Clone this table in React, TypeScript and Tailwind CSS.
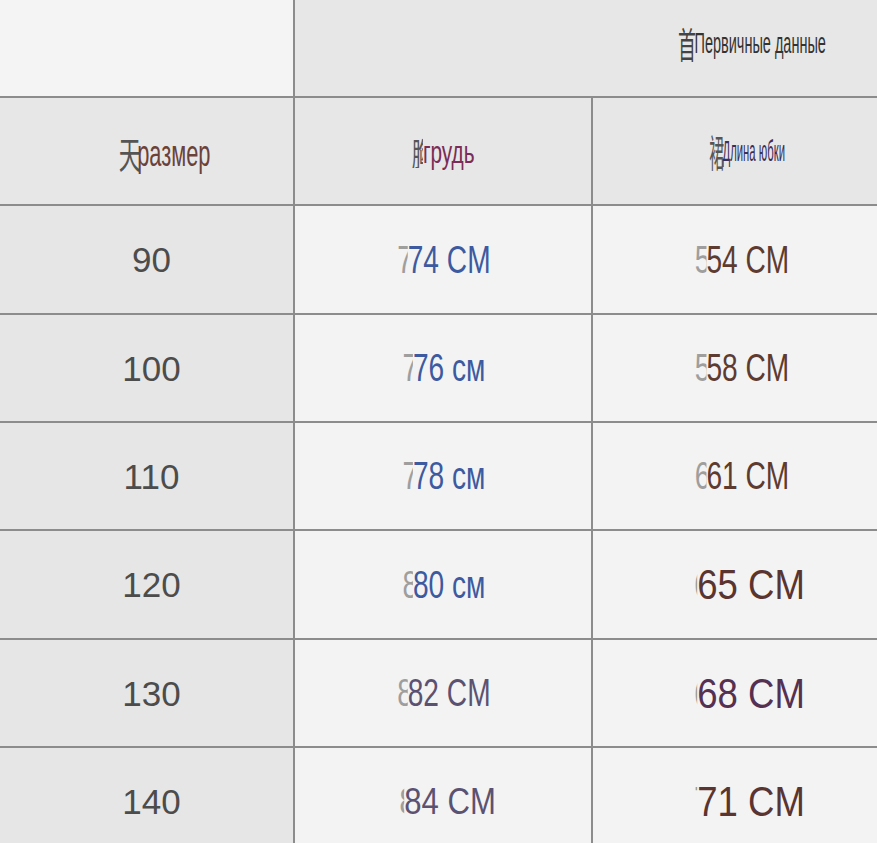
import React from "react";

type Cell = {
  ghost?: string;
  ghostW?: number;
  text: string;
  color: string;
  size: string;
  scale: string;
  pad?: string;
};

// ghost = half-hidden glyph left over in front of the value
const rows: { size: string; chest: Cell; skirt: Cell }[] = [
  {
    size: "90",
    chest: { ghost: "7", ghostW: 14, text: "74 CM", color: "text-[#3d5aa0]", size: "text-[38px]", scale: "scale-x-[0.74]" },
    skirt: { ghost: "5", ghostW: 16, text: "54 CM", color: "text-[#5e3b30]", size: "text-[38px]", scale: "scale-x-[0.74]" },
  },
  {
    size: "100",
    chest: { ghost: "7", ghostW: 14, text: "76 см", color: "text-[#3d5aa0]", size: "text-[38px]", scale: "scale-x-[0.74]" },
    skirt: { ghost: "5", ghostW: 16, text: "58 CM", color: "text-[#5e3b30]", size: "text-[38px]", scale: "scale-x-[0.74]" },
  },
  {
    size: "110",
    chest: { ghost: "7", ghostW: 14, text: "78 см", color: "text-[#3d5aa0]", size: "text-[38px]", scale: "scale-x-[0.74]" },
    skirt: { ghost: "6", ghostW: 16, text: "61 CM", color: "text-[#5e3b30]", size: "text-[38px]", scale: "scale-x-[0.74]" },
  },
  {
    size: "120",
    chest: { ghost: "8", ghostW: 14, text: "80 см", color: "text-[#3d5aa0]", size: "text-[38px]", scale: "scale-x-[0.74]" },
    skirt: { ghost: "6", ghostW: 4, text: "65 CM", color: "text-[#5a3430]", size: "text-[43px]", scale: "scale-x-[0.85]", pad: "pl-[28px]" },
  },
  {
    size: "130",
    chest: { ghost: "8", ghostW: 14, text: "82 CM", color: "text-[#5b5272]", size: "text-[38px]", scale: "scale-x-[0.74]" },
    skirt: { ghost: "6", ghostW: 4, text: "68 CM", color: "text-[#553050]", size: "text-[43px]", scale: "scale-x-[0.85]", pad: "pl-[28px]" },
  },
  {
    size: "140",
    chest: { ghost: "8", ghostW: 6, text: "84 CM", color: "text-[#5b5272]", size: "text-[37px]", scale: "scale-x-[0.84]", pad: "pl-[8px]" },
    skirt: { ghost: "7", ghostW: 4, text: "71 CM", color: "text-[#5a3430]", size: "text-[43px]", scale: "scale-x-[0.85]", pad: "pl-[28px]" },
  },
];

function Value({ c }: { c: Cell }) {
  return (
    <span className={`inline-flex items-center whitespace-nowrap leading-none ${c.size} ${c.scale} ${c.color}`}>
      {c.ghost && (
        <span
          className="inline-block overflow-hidden text-[#8a8a8a] opacity-80"
          style={{ width: c.ghostW }}
        >
          {c.ghost}
        </span>
      )}
      <span>{c.text}</span>
    </span>
  );
}

export default function App() {
  return (
    <div className="h-[843px] w-[877px] overflow-hidden bg-[#8c8c8c] font-['Liberation_Sans',Arial,sans-serif]">
      <div className="grid grid-cols-[293px_296px_1fr] grid-rows-[96px_106px_107px_106px_106px_107px_106px_106px] gap-[2px]">
        {/* top header */}
        <div className="bg-[#f4f4f4]" />
        <div className="col-span-2 flex items-center justify-end bg-[#e7e7e7] pr-[51px] pb-[10px]">
          <span className="inline-flex origin-right scale-x-[0.5] items-center whitespace-nowrap text-[29px] leading-none text-[#333]">
            <span className="mr-[-3px] font-['Noto_Sans_CJK_SC',sans-serif] text-[36px] text-[#444]">首</span>
            <span>Первичные данные</span>
          </span>
        </div>

        {/* second header */}
        <div className="flex items-center justify-center bg-[#e7e7e7] pl-[36px] pt-[4px]">
          <span className="inline-flex scale-x-[0.59] items-center whitespace-nowrap text-[37px] leading-none text-[#6b423a]">
            <span className="mr-[-6px] font-['Noto_Sans_CJK_SC',sans-serif] text-[#555]">天</span>
            <span>размер</span>
          </span>
        </div>
        <div className="flex items-center justify-center bg-[#e7e7e7] pt-[2px]">
          <span className="inline-flex scale-x-[0.65] items-center whitespace-nowrap text-[32px] leading-none text-[#7a2d55]">
            <span className="inline-block w-[17px] overflow-hidden font-['Noto_Sans_CJK_SC',sans-serif] text-[#555]">胸</span>
            <span>грудь</span>
          </span>
        </div>
        <div className="flex items-center justify-center bg-[#e7e7e7] pl-[24px]">
          <span className="inline-flex scale-x-[0.39] items-center whitespace-nowrap text-[29px] leading-none text-[#3a2f5a]">
            <span className="mr-[-4px] font-['Noto_Sans_CJK_SC',sans-serif] text-[38px] text-[#555]">裙</span>
            <span>Длина юбки</span>
          </span>
        </div>

        {rows.map(r => (
          <React.Fragment key={r.size}>
            <div className="flex items-center justify-center bg-[#e6e6e6] pl-[10px]">
              <span className="text-[35px] leading-none text-[#4c4c4c]">{r.size}</span>
            </div>
            <div className={`flex items-center justify-center bg-[#f3f3f3] ${r.chest.pad ?? "pl-[2px]"}`}>
              <Value c={r.chest} />
            </div>
            <div className={`flex items-center justify-center bg-[#f3f3f3] ${r.skirt.pad ?? "pl-[14px]"}`}>
              <Value c={r.skirt} />
            </div>
          </React.Fragment>
        ))}
      </div>
    </div>
  );
}
